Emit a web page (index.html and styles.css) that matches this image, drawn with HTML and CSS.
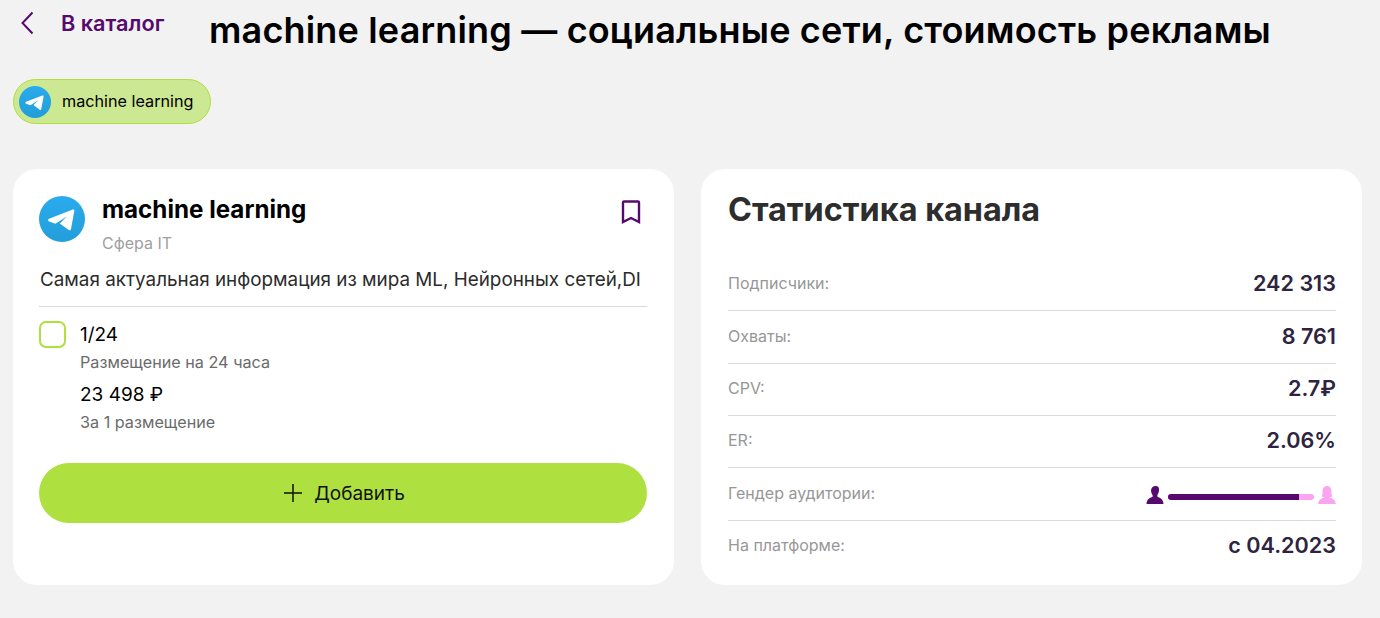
FILE: index.html
```html
<!DOCTYPE html>
<html lang="ru">
<head>
<meta charset="UTF-8">
<meta name="viewport" content="width=device-width, initial-scale=1.0">
<title>machine learning</title>
<link rel="stylesheet" href="styles.css">
</head>
<body>
<div class="top">
    <a class="back">
        <svg class="back-icon" width="14" height="24" viewBox="0 0 14 24"><path d="M12.5 1.5 L2.5 12 L12.5 22.5" fill="none" stroke="#560a6e" stroke-width="2"/></svg>
        <span>В каталог</span>
    </a>
    <h1>machine learning — социальные сети, стоимость рекламы</h1>
</div>

<div class="chips">
    <div class="chip">
        <svg class="tg" width="32" height="32" viewBox="0 0 46 46"><use href="#tg"/></svg>
        <span>machine learning</span>
    </div>
</div>

<div class="cards">
    <div class="card card-left">
        <div class="channel">
            <svg class="tg" width="46" height="46" viewBox="0 0 46 46">
                <defs>
                    <linearGradient id="tgfill" x1="0" y1="0" x2="0" y2="1">
                        <stop offset="0" stop-color="#2aabee"/>
                        <stop offset="1" stop-color="#229ed9"/>
                    </linearGradient>
                </defs>
                <g id="tg">
                    <circle cx="23" cy="23" r="23" fill="url(#tgfill)"/>
                    <path d="M10 22.8 L33.8 13.6 C35 13.2 35.6 13.8 35.3 15 L32 33 C31.7 34.4 30.9 34.7 29.8 34 L20.8 27.4 L27.8 20.6 L16.4 27.7 L10.2 25.6 C8.9 25.1 8.8 23.3 10 22.8 Z" fill="#fff"/>
                </g>
            </svg>
            <div class="channel-info">
                <div class="channel-name">machine learning</div>
                <div class="channel-sub">Сфера IT</div>
            </div>
            <svg class="bookmark" width="20" height="24" viewBox="0 0 20 24"><path d="M2 2.5 Q2 1.5 3 1.5 H17 Q18 1.5 18 2.5 V22 L10 18 L2 22 Z" fill="none" stroke="#560a6e" stroke-width="2.4"/></svg>
        </div>
        <div class="desc">Самая актуальная информация из мира ML, Нейронных сетей,DI</div>
        <div class="offer">
            <div class="check"></div>
            <div class="offer-body">
                <div class="offer-title">1/24</div>
                <div class="offer-note">Размещение на 24 часа</div>
                <div class="offer-price">23 498 ₽</div>
                <div class="offer-note">За 1 размещение</div>
            </div>
        </div>
        <button class="add">
            <svg width="18" height="18" viewBox="0 0 18 18"><path d="M9 0 V18 M0 9 H18" stroke="#111" stroke-width="1.5" fill="none"/></svg>
            <span>Добавить</span>
        </button>
    </div>

    <div class="card card-right">
        <h2>Статистика канала</h2>
        <div class="rows">
            <div class="row"><span class="label">Подписчики:</span><span class="value">242 313</span></div>
            <div class="row"><span class="label">Охваты:</span><span class="value">8 761</span></div>
            <div class="row"><span class="label">CPV:</span><span class="value">2.7₽</span></div>
            <div class="row"><span class="label">ER:</span><span class="value">2.06%</span></div>
            <div class="row">
                <span class="label">Гендер аудитории:</span>
                <div class="gender">
                    <svg width="18" height="18" viewBox="0 0 18 18"><path d="M5 4.5 C5 1.8 7 0 9.7 0 C12.5 0 13.3 1.8 13 4.5 C12.8 6.5 12 8 11.4 9 L11.4 10.8 C13.5 12 17.2 12.5 17.5 18 H0.5 C0.8 12.5 4.5 12 6.6 10.8 L6.6 9 C5.8 8 5.2 6.5 5 4.5 Z" fill="#560a6e"/></svg>
                    <div class="bar"><div class="bar-male" style="width: 90%"></div></div>
                    <svg width="18" height="18" viewBox="0 0 18 18"><path d="M4.6 5 C4.6 1.8 6.6 0 9 0 C11.4 0 13.4 1.8 13.4 5 C13.4 7.5 13.6 9 14.4 10.6 L11.4 11.2 C13.5 12.2 17.4 12.8 17.8 18 H0.2 C0.6 12.8 4.5 12.2 6.6 11.2 L3.6 10.6 C4.4 9 4.6 7.5 4.6 5 Z" fill="#fba4f0"/></svg>
                </div>
            </div>
            <div class="row"><span class="label">На платформе:</span><span class="value">с 04.2023</span></div>
        </div>
    </div>
</div>
</body>
</html>
```

FILE: styles.css
```css
body {
    font-family: Inter, "Noto Sans", sans-serif;
    margin: 0;
    padding: 0 18px 33px 13px;
    background-color: #f2f2f2;
    color: #000;
}
.top {
    display: flex;
    align-items: flex-start;
    height: 79px;
}
.back {
    display: flex;
    align-items: center;
    gap: 27px;
    padding: 11px 0 0 7px;
    width: 196px;
    box-sizing: border-box;
    font-size: 21.7px;
    font-weight: 600;
    line-height: 24px;
    color: #560a6e;
}
h1 {
    margin: 8px 0 0;
    font-size: 36px;
    font-weight: 600;
    line-height: 44px;
    letter-spacing: 0.17px;
    white-space: nowrap;
}
.chips {
    display: flex;
    height: 90px;
    align-items: flex-start;
}
.chip {
    display: flex;
    align-items: center;
    gap: 11px;
    height: 45px;
    padding: 0 16px 2px 5px;
    box-sizing: border-box;
    background-color: #cde892;
    border: 1px solid #aee03f;
    border-radius: 23px;
    font-size: 16.2px;
}
.chip .tg {
    margin-top: 2px;
}
.cards {
    display: grid;
    grid-template-columns: 661px 661px;
    gap: 27px;
}
.card {
    height: 416px;
    box-sizing: border-box;
    background-color: #fff;
    border-radius: 24px;
}
.card-left {
    padding: 27px 27px 0 26px;
}
.channel {
    display: flex;
    align-items: flex-start;
    gap: 17px;
}
.channel-info {
    flex: 1;
}
.channel-name {
    font-size: 24.2px;
    font-weight: 700;
    line-height: 27px;
}
.channel-sub {
    margin-top: 11px;
    font-size: 16px;
    line-height: 19px;
    color: #a0a0a0;
}
.bookmark {
    margin: 4px 6px 0 0;
}
.desc {
    margin-top: 15px;
    padding: 0 0 15px 1px;
    border-bottom: 1px solid #d9d9d9;
    font-size: 18.85px;
    line-height: 23px;
    color: #2b2b2b;
    white-space: nowrap;
    overflow: hidden;
}
.offer {
    display: flex;
    gap: 14px;
    margin-top: 14px;
}
.check {
    width: 27px;
    height: 27px;
    box-sizing: border-box;
    border: 2px solid #aee03f;
    border-radius: 7px;
}
.offer-title, .offer-price {
    font-size: 19px;
    line-height: 23px;
}
.offer-title {
    margin-top: 2px;
}
.offer-note {
    margin-top: 7px;
    font-size: 16.2px;
    line-height: 19px;
    color: #6b6b6b;
}
.offer-price {
    margin-top: 11px;
}
.add {
    display: flex;
    align-items: center;
    justify-content: center;
    gap: 12px;
    width: 608px;
    height: 60px;
    margin-top: 31px;
    padding: 0 0 0 3px;
    border: none;
    border-radius: 30px;
    background-color: #aee03f;
    font-family: inherit;
    font-size: 19px;
    color: #111;
    cursor: pointer;
}
.card-right {
    padding: 21px 26px 0 27px;
}
h2 {
    margin: 0;
    font-size: 32.4px;
    font-weight: 700;
    line-height: 40px;
    color: #2d2d2d;
}
.rows {
    margin-top: 29px;
}
.row {
    display: flex;
    align-items: center;
    justify-content: space-between;
    height: 52.35px;
    padding-bottom: 3px;
    box-sizing: border-box;
    border-bottom: 1px solid #d9d9d9;
}
.row:last-child {
    border-bottom: none;
}
.label {
    font-size: 16px;
    color: #979797;
}
.value {
    font-size: 21.6px;
    font-weight: 600;
    color: #2e2440;
}
.gender {
    display: flex;
    align-items: center;
    gap: 4px;
    margin-top: 5px;
}
.bar {
    width: 146px;
    height: 6px;
    border-radius: 3px;
    background-color: #fba4f0;
    overflow: hidden;
    margin-top: 4px;
}
.bar-male {
    height: 100%;
    background-color: #560a6e;
}
```
